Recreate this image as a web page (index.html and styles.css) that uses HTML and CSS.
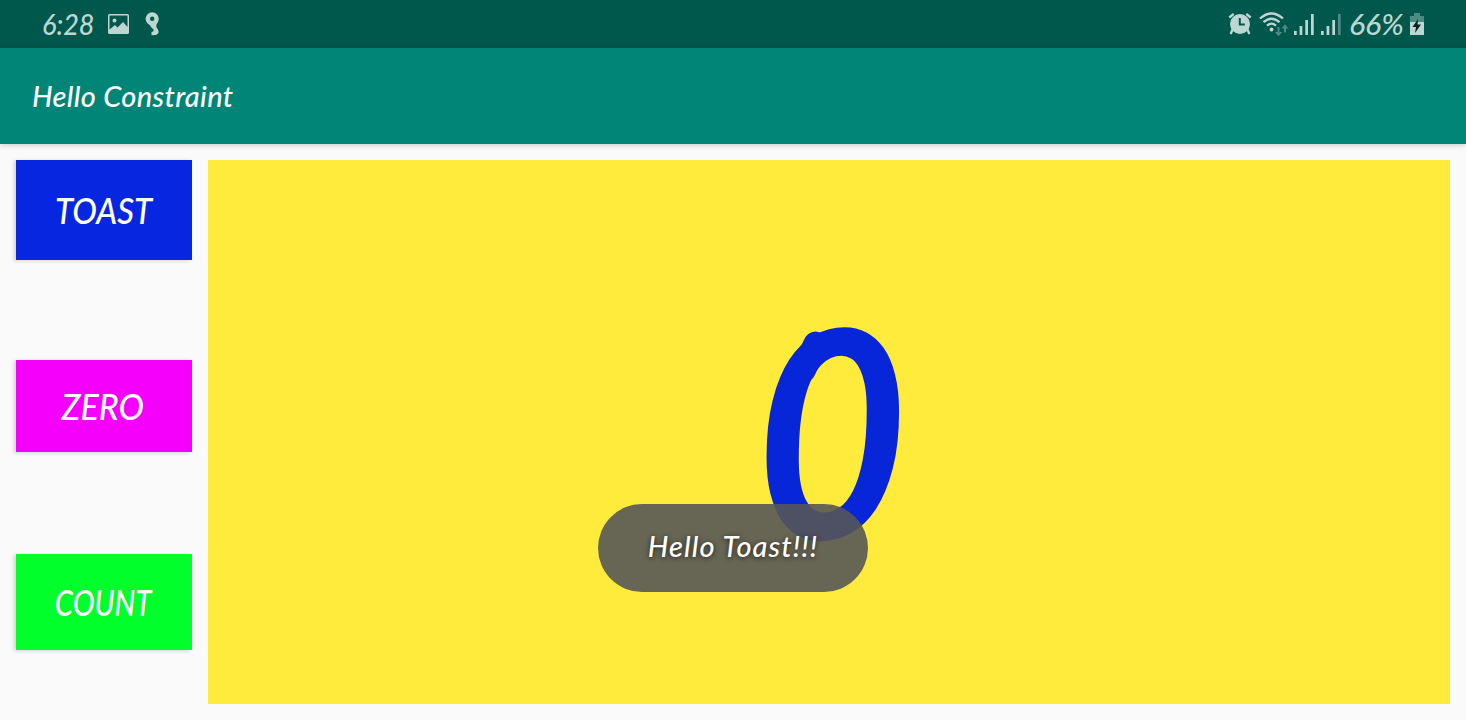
FILE: index.html
```html
<!DOCTYPE html>
<html lang="en">
<head>
<meta charset="utf-8">
<title>Hello Constraint</title>
<link rel="stylesheet" href="styles.css">
</head>
<body>
<header class="status">
  <span class="clock"><span class="clock-text">6:28</span></span>
  <svg class="ico-photo" width="22" height="20" viewBox="0 0 22 20"><path fill-rule="evenodd" d="M1.500 0h18Q21 0 21 1.500v17q0 1.500-1.500 1.500h-18Q0 20 0 18.500v-17Q0 0 1.500 0ZM1.500 1.500v14L7 11l2.500 2.500L15 8l4.500 5v-11.500ZM6.500 4.500a2 2 0 1 1 0 4a2 2 0 1 1 0-4Z"/></svg>
  <svg class="ico-nine" width="15" height="24" viewBox="0 0 15 24"><circle cx="7.200" cy="6.800" r="4.400" fill="none" stroke="currentColor" stroke-width="4.400"/><path d="M4 11c1 3 2 4.500 4 6c1.500 1.200 1 2.800-1.500 3v3c5 .8 7.500-1 7-4c-.4-2.500-3-3.500-2-6.500l2-4z"/></svg>
  <span class="spacer"></span>
  <svg class="ico-alarm" width="24" height="24" viewBox="0 0 24 24"><path d="M4.500 17.500 2.600 22M19.500 17.500 21.400 22M1.300 5.500 5.700 1.800M22.700 5.500 18.300 1.800" fill="none" stroke="currentColor" stroke-width="2.400"/><path fill-rule="evenodd" d="M12 2a10 10 0 1 1 0 20a10 10 0 1 1 0-20ZM10.800 6v7.500h6v-2h-4V6Z"/></svg>
  <svg class="ico-wifi" width="30" height="25" viewBox="0 0 30 25"><g fill="none" stroke="currentColor" stroke-width="2.300"><path d="M1 6.500Q12.500-3.500 24 6.500M4.500 10.200Q12.500 3.200 20.500 10.200M8 13.600Q12.500 9.700 17 13.600"/></g><circle cx="12.500" cy="17.500" r="1.900"/><path class="faint" d="M18.500 15v5h-2.700l3.700 4.300 3.700-4.300h-2.700v-5zM25 20.500v-4h-2.500l3.500-4.300 3.500 4.300H27v4z"/></svg>
  <svg class="ico-signal" width="20" height="21" viewBox="0 0 20 21"><path d="M0 17h2.700v4H0zM5.600 12h2.700v9H5.600zM11.300 6H14v15h-2.700zM17 0h2.700v21H17z"/></svg>
  <svg class="ico-signal2" width="20" height="21" viewBox="0 0 20 21"><path d="M0 17h2.700v4H0zM5.600 12h2.700v9H5.600zM11.300 6H14v15h-2.700z"/><path class="faint" d="M17 0h2.700v21H17z"/></svg>
  <span class="level"><span class="level-text">66%</span></span>
  <svg class="ico-battery" width="14" height="22" viewBox="0 0 14 22"><path class="faint" d="M4 0h6v3h4v6H0V3h4z"/><path d="M0 9h14v13H0z"/><path d="M8 6 2.500 14H6l-1 6 6-8.500H7.500z" class="bolt"/></svg>
</header>
<div class="appbar"><h1 class="title">Hello Constraint</h1></div>
<main class="content">
  <div class="actions">
    <button class="btn btn-toast"><span class="label">TOAST</span></button>
    <button class="btn btn-zero"><span class="label label-zero">ZERO</span></button>
    <button class="btn btn-count"><span class="label label-count">COUNT</span></button>
  </div>
  <div class="counter"><span class="digit">0</span></div>
</main>
<div class="toast"><span class="toast-text">Hello Toast!!!</span></div>
</body>
</html>
```
FILE: styles.css
```css
* { box-sizing: border-box; }
body {
  margin: 0;
  width: 1466px;
  height: 720px;
  overflow: hidden;
  background: #fafafa;
  font-family: Lato, "Open Sans", sans-serif;
  font-style: italic;
  font-weight: 500;
}
.status {
  display: flex;
  align-items: center;
  height: 48px;
  padding: 0 42px;
  background: #00574b;
  color: #bdd6d2;
}
.status svg { flex: none; fill: currentColor; }
.clock { width: 66px; }
.clock-text, .level-text {
  display: inline-block;
  font-size: 29px;
  line-height: 48px;
  transform-origin: 0 50%;
}
.clock-text { transform: scaleX(.93); }
.level-text { transform: translateX(-2px) scaleX(1.04); }
.ico-nine { margin-left: 15px; }
.spacer { flex: 1; }
.ico-wifi { margin-left: 7px; }
.ico-signal { margin-left: 5px; }
.ico-signal2 { margin-left: 7px; }
.level { width: 59px; margin-left: 10px; }
.status .faint { fill: #4d8b82; }
.status .bolt { fill: #06231f; }
.appbar {
  display: flex;
  align-items: center;
  height: 96px;
  padding: 0 32px;
  background: #008577;
  box-shadow: 0 1px 6px rgba(0, 0, 0, .2);
}
.title {
  margin: -2px 0 0;
  color: #fff;
  font-size: 29px;
  font-weight: 500;
  letter-spacing: .35px;
  white-space: nowrap;
}
.content {
  display: flex;
  gap: 16px;
  height: 576px;
  padding: 16px;
}
.actions {
  display: flex;
  flex-direction: column;
  width: 176px;
}
.btn {
  display: flex;
  align-items: center;
  justify-content: center;
  padding: 0 2px 2px 0;
  border: 0;
  color: #fff;
  font: inherit;
  font-size: 37px;
  box-shadow: -2px 1px 4px rgba(0, 0, 0, .16);
}
.btn-toast { height: 100px; background: #0726e0; }
.btn-zero { height: 92px; margin-top: 100px; background: #f400fb; }
.btn-count { height: 96px; margin-top: 102px; background: #00ff2b; }
.label { display: inline-block; transform: scaleX(.89); }
.label-zero { transform: scaleX(.92); }
.label-count { transform: scaleX(.79); }
.counter {
  display: flex;
  flex: 1;
  align-items: center;
  justify-content: center;
  overflow: hidden;
  background: #ffeb3b;
}
.digit {
  position: relative;
  color: #0726d8;
  font-size: 290px;
  font-weight: 700;
  line-height: 1;
  transform: translate(2px, -5px) scaleX(.91);
}
/* pen-start nub at the digit's upper left */
.digit::before {
  content: "";
  position: absolute;
  left: 47px;
  top: 48px;
  width: 27px;
  height: 54px;
  border-radius: 14px;
  background: #0726d8;
  transform: rotate(28deg);
}
.toast {
  position: absolute;
  left: 598px;
  top: 504px;
  display: flex;
  align-items: center;
  justify-content: center;
  width: 270px;
  height: 88px;
  padding-bottom: 5px;
  border-radius: 44px;
  background: rgba(86, 86, 86, .9);
}
.toast-text {
  color: #fff;
  font-size: 29px;
  letter-spacing: 1.1px;
  white-space: nowrap;
  text-shadow: 0 1px 5px rgba(0, 0, 0, .7);
}
```
